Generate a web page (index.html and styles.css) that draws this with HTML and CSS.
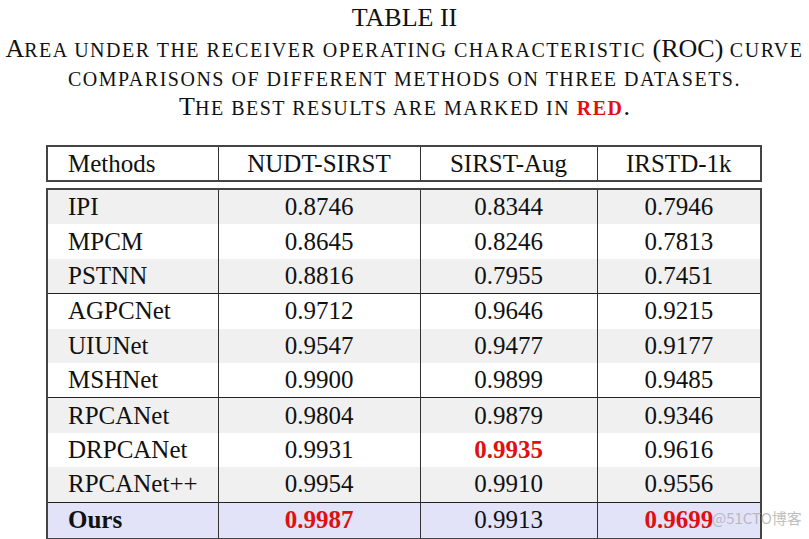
FILE: index.html
```html
<!DOCTYPE html>
<html>
<head>
<meta charset="utf-8">
<link rel="stylesheet" href="styles.css">
</head>
<body>
<div class="page">
  <div class="caption">
    <div class="label">TABLE II</div>
    <div class="line">A<span class="s">rea under the receiver operating characteristic</span> (ROC) <span class="s">curve</span></div>
    <div class="line"><span class="s">comparisons of different methods on three datasets.</span></div>
    <div class="line">T<span class="s">he best results are marked in </span><b class="red s">red</b>.</div>
  </div>

  <table class="tbl head">
    <colgroup><col class="c1"><col class="c2"><col class="c3"><col class="c4"></colgroup>
    <tr><td class="m">Methods</td><td>NUDT-SIRST</td><td>SIRST-Aug</td><td>IRSTD-1k</td></tr>
  </table>

  <table class="tbl body">
    <colgroup><col class="c1"><col class="c2"><col class="c3"><col class="c4"></colgroup>
    <tr class="g"><td class="m">IPI</td><td>0.8746</td><td>0.8344</td><td>0.7946</td></tr>
    <tr><td class="m">MPCM</td><td>0.8645</td><td>0.8246</td><td>0.7813</td></tr>
    <tr class="g"><td class="m">PSTNN</td><td>0.8816</td><td>0.7955</td><td>0.7451</td></tr>
    <tr class="sep"><td class="m">AGPCNet</td><td>0.9712</td><td>0.9646</td><td>0.9215</td></tr>
    <tr class="g"><td class="m">UIUNet</td><td>0.9547</td><td>0.9477</td><td>0.9177</td></tr>
    <tr><td class="m">MSHNet</td><td>0.9900</td><td>0.9899</td><td>0.9485</td></tr>
    <tr class="g sep"><td class="m">RPCANet</td><td>0.9804</td><td>0.9879</td><td>0.9346</td></tr>
    <tr><td class="m">DRPCANet</td><td>0.9931</td><td><b class="red">0.9935</b></td><td>0.9616</td></tr>
    <tr class="g"><td class="m">RPCANet++</td><td>0.9954</td><td>0.9910</td><td>0.9556</td></tr>
    <tr class="ours sep"><td class="m"><b>Ours</b></td><td><b class="red">0.9987</b></td><td>0.9913</td><td><b class="red">0.9699</b></td></tr>
  </table>
  <div class="wm">@51CTO博客</div>
</div>
</body>
</html>
```
FILE: styles.css
```css
html, body {
  margin: 0;
  padding: 0;
  background: #ffffff;
}
.page {
  position: relative;
  width: 809px;
  height: 539px;
  font-family: "Liberation Serif", "Times New Roman", serif;
  color: #111;
  overflow: hidden;
}
.caption {
  text-align: center;
  padding-top: 3px;
  font-size: 26px;
  line-height: 29px;
  white-space: nowrap;
}
.label {
  height: 29px;
  margin-bottom: 2px;
}
.line {
  height: 29px;
  overflow: visible;
}
.s {
  font-size: 20px;
  line-height: 20px;
  text-transform: uppercase;
  letter-spacing: 1.5px;
}
.red {
  color: #e01010;
  font-weight: bold;
}
.tbl {
  border-collapse: collapse;
  table-layout: fixed;
  margin-left: 46px;
  width: 714px;
  font-size: 25px;
}
.c1 { width: 171px; }
.c2 { width: 202px; }
.c3 { width: 177px; }
.c4 { width: 164px; }
.tbl td {
  border-left: 1.5px solid #333;
  border-right: 1.5px solid #333;
  text-align: center;
  padding: 0;
  white-space: nowrap;
}
.tbl td.m {
  text-align: left;
  padding-left: 20px;
}
.head {
  margin-top: 24px;
  border: 2px solid #444;
}
.head td {
  height: 33px;
  line-height: 33px;
}
.body {
  margin-top: 6px;
  border: 2px solid #444;
}
.body td {
  height: 34.4px;
  line-height: 34px;
}
.body tr.g td {
  background: #f0f0f0;
}
.body tr.sep td {
  border-top: 1.5px solid #222;
}
.body tr.ours td {
  height: 35px;
  background: #e2e2f8;
}
.wm {
  position: absolute;
  left: 712px;
  top: 507px;
  font-family: "Noto Sans CJK SC", "DejaVu Sans", sans-serif;
  font-size: 15px;
  color: rgba(170, 170, 170, 0.75);
}
```
